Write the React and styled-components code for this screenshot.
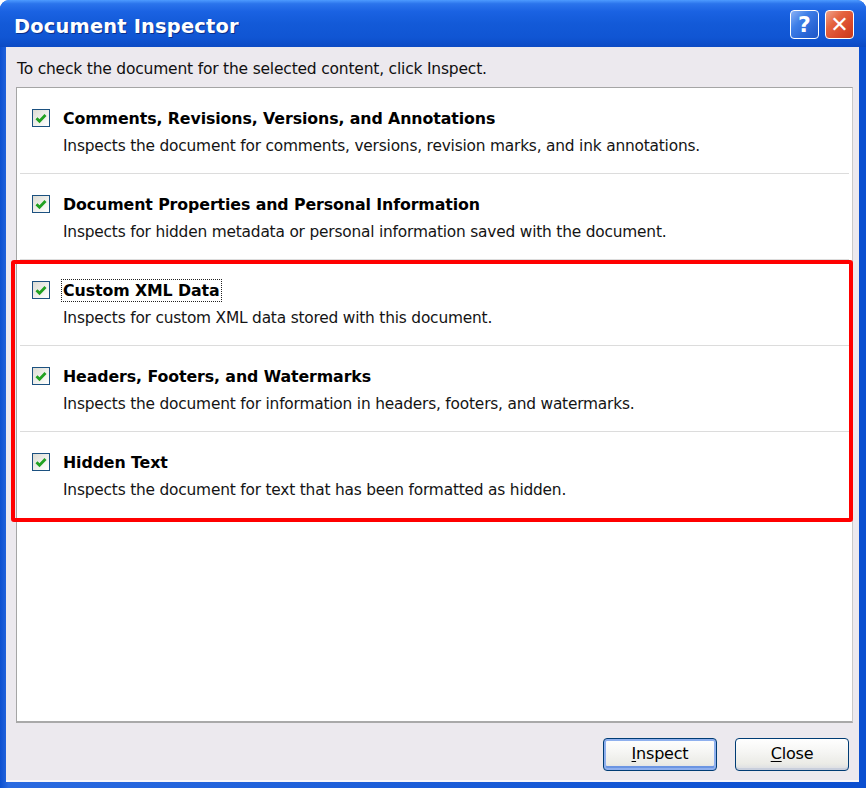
import React from "react";
import styled, { createGlobalStyle } from "styled-components";

const Global = createGlobalStyle`
  html, body { margin: 0; padding: 0; background: #ffffff; }
  #root { width: 866px; height: 788px; }
`;

const Window = styled.div`
  width: 866px;
  height: 788px;
  box-sizing: border-box;
  display: flex;
  flex-direction: column;
  background: linear-gradient(90deg, #0b4fd0 0%, #2a6ae0 1%, #0b4fd0 99%);
  border-radius: 9px 9px 0 0;
  overflow: hidden;
  font-family: "DejaVu Sans", Tahoma, sans-serif;
`;

const TitleBar = styled.div`
  height: 47px;
  flex: none;
  box-sizing: border-box;
  display: flex;
  align-items: center;
  padding: 2px 12px 0 14px;
  background: linear-gradient(
    180deg,
    #4d9bff 0%,
    #2b74ec 8%,
    #1a62e2 25%,
    #135ad8 50%,
    #1055d3 80%,
    #0c4ac4 100%
  );
`;

const Title = styled.div`
  flex: 1;
  color: #ffffff;
  font-family: "DejaVu Sans", sans-serif;
  font-weight: bold;
  font-size: 19.4px;
  letter-spacing: 0.2px;
  text-shadow: 1px 1px 0 #0a2f8a;
  padding-top: 3px;
`;

const CaptionButton = styled.div`
  width: 29px;
  height: 29px;
  box-sizing: border-box;
  margin-left: 6px;
  border: 1px solid #ffffff;
  border-radius: 4px;
  display: flex;
  align-items: center;
  justify-content: center;
  color: #ffffff;
  font-family: "DejaVu Sans", sans-serif;
  font-weight: bold;
  font-size: 22px;
  background: ${(p) =>
    p.$danger
      ? "linear-gradient(135deg, #f0a48c 0%, #e5643f 35%, #d9482a 70%, #c7391c 100%)"
      : "linear-gradient(135deg, #8cb3f5 0%, #3f7fe8 35%, #2a66d6 70%, #1e56c6 100%)"};
`;

const Body = styled.div`
  flex: 1;
  margin: 0 7px 6px 6px;
  display: flex;
  flex-direction: column;
  background: #ece9ee;
  border-bottom: 2px solid #f8f6fa;
`;

const Instruction = styled.div`
  padding: 13px 0 0 11px;
  height: 27px;
  font-size: 15.5px;
  color: #101010;
  letter-spacing: -0.2px;
`;

const ListBox = styled.div`
  margin: 0 6px 0 10px;
  height: 636px;
  box-sizing: border-box;
  background: #ffffff;
  border: 1px solid #a5a5a5;
  border-right-color: #c9c9c9;
  border-bottom: 2px solid #a9a9a9;
  padding: 0 3px;
  display: flex;
  flex-direction: column;
`;

const Group = styled.div`
  position: relative;
  display: flex;
  flex-direction: column;
`;

const Highlight = styled.div`
  position: absolute;
  left: -9px;
  right: -4px;
  top: 0px;
  bottom: -4px;
  border: 4px solid #ff0000;
  border-radius: 3px;
  pointer-events: none;
`;

const Item = styled.div`
  height: 86px;
  box-sizing: border-box;
  display: grid;
  grid-template-columns: 18px 1fr;
  column-gap: 13px;
  padding: 20px 0 0 12px;
  border-bottom: ${(p) => (p.$last ? "none" : "1px solid #dcdcdc")};
`;

const Check = styled.div`
  width: 18px;
  height: 18px;
  box-sizing: border-box;
  margin-top: 1px;
  border: 1px solid #1c5180;
  background: linear-gradient(135deg, #dcdcd4 0%, #f2f2ee 60%, #ffffff 100%);
  display: flex;
  align-items: center;
  justify-content: center;
`;

const TextCol = styled.div`
  display: flex;
  flex-direction: column;
`;

const ItemTitle = styled.span`
  align-self: flex-start;
  font-weight: bold;
  font-size: 15.8px;
  color: #000000;
  letter-spacing: -0.1px;
  line-height: 21px;
  padding: 0 1px;
  margin-left: -1px;
  outline: ${(p) => (p.$focus ? "1px dotted #222" : "none")};
`;

const ItemDesc = styled.div`
  margin-top: 8px;
  font-size: 15.4px;
  color: #141414;
  letter-spacing: -0.2px;
  line-height: 19px;
`;

const Footer = styled.div`
  flex: 1;
  display: flex;
  justify-content: flex-end;
  align-items: flex-start;
  gap: 18px;
  padding: 15px 10px 0 0;
`;

const Button = styled.button`
  width: 114px;
  height: 33px;
  box-sizing: border-box;
  border: 1px solid #003c74;
  border-radius: 4px;
  font-family: "DejaVu Sans", Tahoma, sans-serif;
  font-size: 16px;
  color: #000;
  letter-spacing: -0.2px;
  background: linear-gradient(180deg, #ffffff 0%, #f6f6f4 40%, #ebebe6 80%, #d8dbe3 100%);
  box-shadow: ${(p) =>
    p.$default
      ? "inset 0 0 0 2px #8fb0ee, inset 0 -2px 0 2px #6b95e2"
      : "inset 0 -2px 0 #c9cfdc"};
  padding: 0 0 2px 0;
  u { text-decoration: underline; text-underline-offset: 2px; }
`;

const CheckMark = () => (
  <svg width="12" height="11" viewBox="0 0 12 11">
    <path d="M1.5 5.2 L4.5 8.3 L10.5 2" fill="none" stroke="#21a121" strokeWidth="2.8" />
  </svg>
);

const items = [
  {
    title: "Comments, Revisions, Versions, and Annotations",
    desc: "Inspects the document for comments, versions, revision marks, and ink annotations.",
  },
  {
    title: "Document Properties and Personal Information",
    desc: "Inspects for hidden metadata or personal information saved with the document.",
  },
  {
    title: "Custom XML Data",
    desc: "Inspects for custom XML data stored with this document.",
    focus: true,
  },
  {
    title: "Headers, Footers, and Watermarks",
    desc: "Inspects the document for information in headers, footers, and watermarks.",
  },
  {
    title: "Hidden Text",
    desc: "Inspects the document for text that has been formatted as hidden.",
  },
];

const Row = ({ item, last }) => (
  <Item $last={last}>
    <Check>
      <CheckMark />
    </Check>
    <TextCol>
      <ItemTitle $focus={item.focus}>{item.title}</ItemTitle>
      <ItemDesc>{item.desc}</ItemDesc>
    </TextCol>
  </Item>
);

export default function App() {
  return (
    <>
      <Global />
      <Window>
        <TitleBar>
          <Title>Document Inspector</Title>
          <CaptionButton>?</CaptionButton>
          <CaptionButton $danger>✕</CaptionButton>
        </TitleBar>
        <Body>
          <Instruction>To check the document for the selected content, click Inspect.</Instruction>
          <ListBox>
            <Row item={items[0]} />
            <Row item={items[1]} />
            <Group>
              <Highlight />
              <Row item={items[2]} />
              <Row item={items[3]} />
              <Row item={items[4]} last />
            </Group>
          </ListBox>
          <Footer>
            <Button $default>
              <u>I</u>nspect
            </Button>
            <Button>
              <u>C</u>lose
            </Button>
          </Footer>
        </Body>
      </Window>
    </>
  );
}
